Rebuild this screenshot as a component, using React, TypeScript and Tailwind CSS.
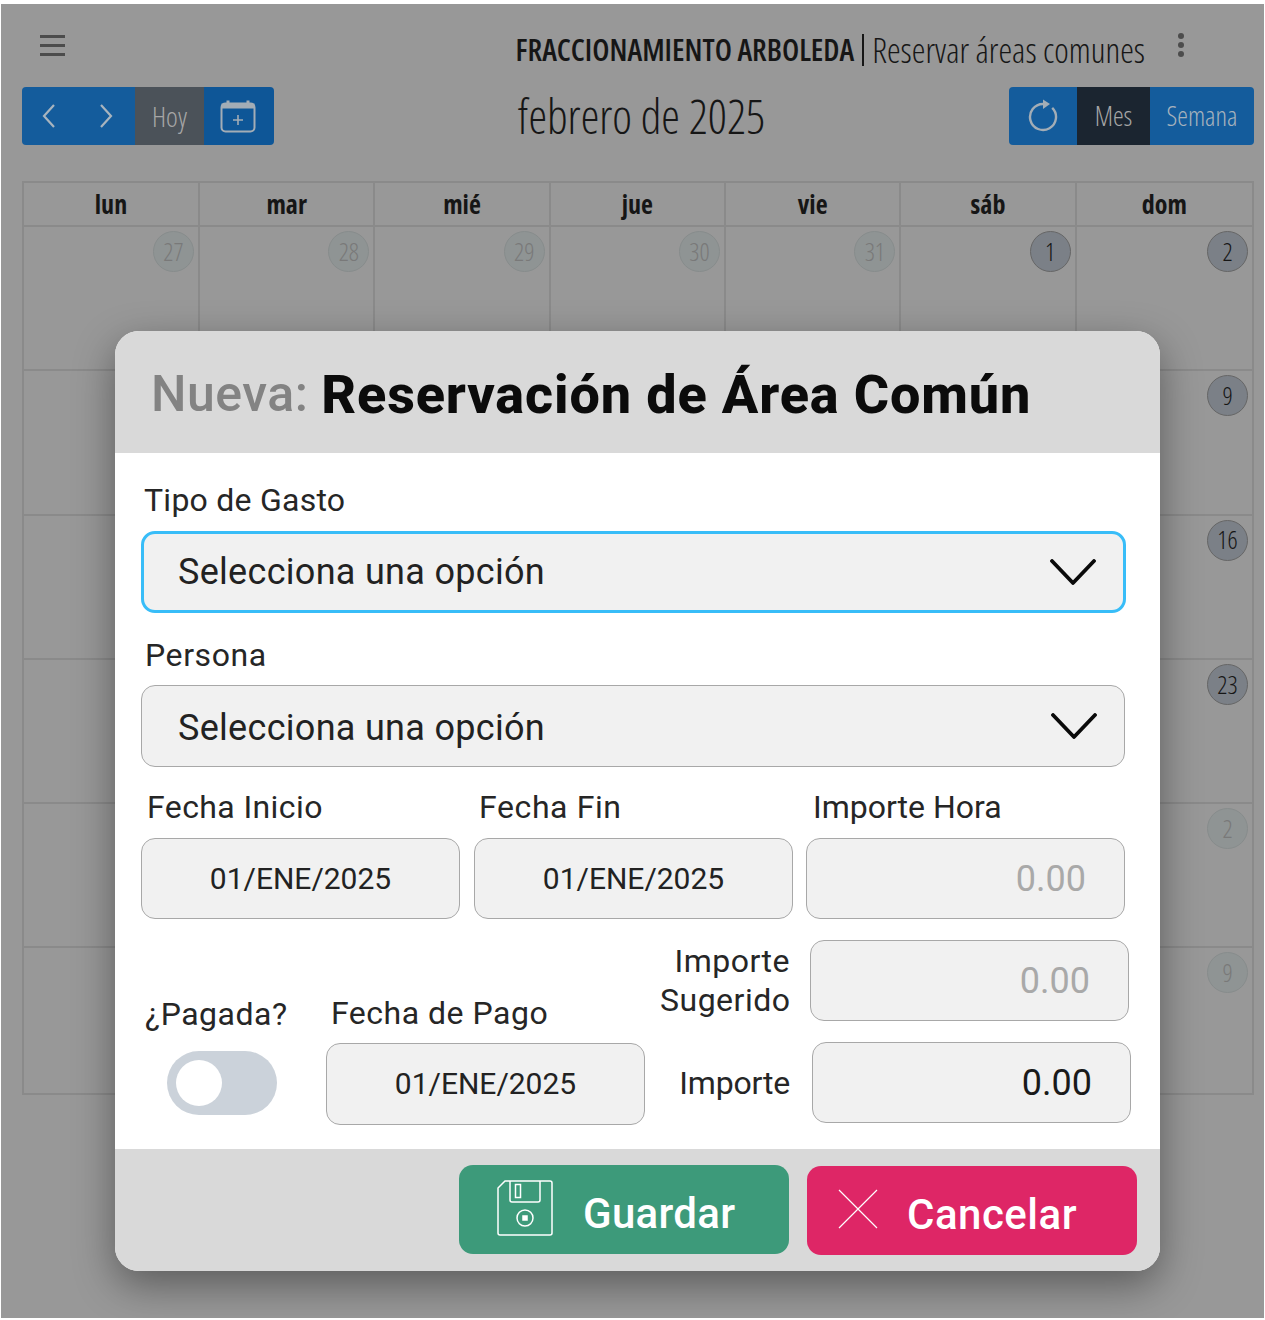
import React from "react";

const weekDays = ["lun", "mar", "mié", "jue", "vie", "sáb", "dom"];

const weeks = [
  [27, 28, 29, 30, 31, 1, 2],
  [3, 4, 5, 6, 7, 8, 9],
  [10, 11, 12, 13, 14, 15, 16],
  [17, 18, 19, 20, 21, 22, 23],
  [24, 25, 26, 27, 28, 1, 2],
  [3, 4, 5, 6, 7, 8, 9],
];

const isFaded = (w: number, d: number) => (w === 0 && d < 5) || (w === 4 && d > 4) || w === 5;

const Chevron = () => (
  <svg width="46" height="26" viewBox="0 0 46 26" fill="none" stroke="#0a0a0a" strokeWidth="3.8" strokeLinecap="round" strokeLinejoin="round">
    <path d="M2 2 L23 24 L44 2" />
  </svg>
);

const Select = ({ focused }: { focused?: boolean }) => (
  <div
    className={
      focused
        ? "flex h-[82px] items-center justify-between rounded-[14px] border-[3px] border-[#38bdf8] bg-[#f1f1f1] pl-[34px] pr-[27px] text-[36px] text-[#222]"
        : "mr-px flex h-[82px] items-center justify-between rounded-[14px] border border-[#a8a8a8] bg-[#f1f1f1] pl-[36px] pr-[27px] text-[36px] text-[#222]"
    }
  >
    <span className={focused ? "tracking-[0.3px]" : "pt-[3px] tracking-[0.3px]"}>Selecciona una opción</span>
    <Chevron />
  </div>
);

const DateBox = ({ tall }: { tall?: boolean }) => (
  <div
    className={
      tall
        ? "flex h-[82px] w-[319px] shrink-0 items-center justify-center rounded-[14px] border border-[#a8a8a8] bg-[#f1f1f1] text-[30px] text-[#222]"
        : "flex h-[81px] w-[319px] shrink-0 items-center justify-center rounded-[14px] border border-[#a8a8a8] bg-[#f1f1f1] text-[30px] text-[#222]"
    }
  >
    01/ENE/2025
  </div>
);

const AmountBox = ({ muted, className }: { muted?: boolean; className?: string }) => (
  <div
    className={`flex h-[81px] w-[319px] shrink-0 items-center justify-end rounded-[14px] border border-[#a8a8a8] bg-[#f1f1f1] pr-[38px] text-[36px] ${
      muted ? "text-[#a9a9a9]" : "text-[#1a1a1a]"
    } ${className ?? ""}`}
  >
    0.00
  </div>
);

export default function App() {
  return (
    <div className="h-[1320px] w-[1265px] bg-white pb-[2px] pl-px pr-px pt-[4px]">
      <div className="relative h-full overflow-hidden bg-[#989898] font-['Open_Sans',sans-serif] [font-stretch:75%]">
        {/* title bar */}
        <div className="flex h-[83px] items-start justify-between pl-[39px] pr-[119px]">
          <svg className="mt-[30px]" width="25" height="22" viewBox="0 0 25 22" fill="#4c4c4c">
            <rect y="1" width="25" height="3" />
            <rect y="10" width="25" height="3" />
            <rect y="19" width="25" height="3" />
          </svg>
          <div className="ml-auto mt-[27px] flex items-center leading-[38px] text-[#161616]">
            <span className="text-[30.3px] font-semibold">FRACCIONAMIENTO ARBOLEDA</span>
            <span className="mx-[8px] h-[32px] w-[2px] bg-[#161616]" />
            <span className="text-[34.6px] font-light">Reservar áreas comunes</span>
          </div>
          <div className="absolute right-[80px] top-[29px] flex flex-col gap-[3px]">
            <span className="h-[6px] w-[6px] rounded-full bg-[#4c4c4c]" />
            <span className="h-[6px] w-[6px] rounded-full bg-[#4c4c4c]" />
            <span className="h-[6px] w-[6px] rounded-full bg-[#4c4c4c]" />
          </div>
        </div>

        {/* toolbar */}
        <div className="flex h-[58px] items-center justify-between pl-[21px] pr-[10px]">
          <div className="flex h-[58px] w-[252px] overflow-hidden rounded-[4px]">
            <div className="flex w-[113px] items-center justify-between bg-[#145c9c] pl-[20px] pr-[22px]">
              <svg width="14" height="26" viewBox="0 0 14 26" fill="none" stroke="#a8b4be" strokeWidth="2.2"><path d="M12 2 L2 13 L12 24" /></svg>
              <svg width="14" height="26" viewBox="0 0 14 26" fill="none" stroke="#a8b4be" strokeWidth="2.2"><path d="M2 2 L12 13 L2 24" /></svg>
            </div>
            <div className="flex w-[69px] items-center justify-center bg-[#4b5259] text-[28px] font-light text-[#a6a6a6]">Hoy</div>
            <div className="flex flex-1 items-center justify-center bg-[#0e5697] pr-[2px]">
              <svg width="36" height="33" viewBox="0 0 36 33" fill="none" stroke="#a3adb6" strokeWidth="2">
                <rect x="1.5" y="3.5" width="33" height="28" rx="4" />
                <path d="M1.5 6 H34.5" strokeWidth="5" />
                <path d="M8 0.5 V4 M28 0.5 V4" strokeWidth="3" />
                <path d="M18 15 V25 M13 20 H23" strokeWidth="1.6" />
              </svg>
            </div>
          </div>
          <div className="text-[47px] font-light text-[#161616]">febrero de 2025</div>
          <div className="flex h-[58px] w-[245px] overflow-hidden rounded-[4px]">
            <div className="flex w-[68px] items-center justify-center bg-[#145c9c]">
              <svg width="30" height="34" viewBox="0 0 30 34" fill="none" stroke="#a3adb6" strokeWidth="2.4">
                <path d="M15 5 A13 13 0 1 0 24.2 8.8" />
                <path d="M15 0.5 L22 5 L15 10 Z" fill="#a3adb6" stroke="none" />
              </svg>
            </div>
            <div className="flex w-[73px] items-center justify-center bg-[#1b2530] text-[27px] font-light text-[#a6a6a6]">Mes</div>
            <div className="flex flex-1 items-center justify-center bg-[#145c9c] text-[27px] font-light text-[#a6b2bd]">Semana</div>
          </div>
        </div>

        {/* calendar */}
        <div className="ml-[21px] mt-[36px] w-[1232px] border-2 border-[#8a8a8a]">
          <div className="grid h-[44px] grid-cols-[176px_repeat(6,1fr)] border-b-2 border-[#8a8a8a]">
            {weekDays.map((day, i) => (
              <div key={day} className={`flex items-center justify-center text-[26px] font-bold text-[#161616] ${i < 6 ? "border-r-2 border-[#8a8a8a]" : ""}`}>
                {day}
              </div>
            ))}
          </div>
          {weeks.map((week, w) => (
            <div key={w} className={`grid h-[144.3px] grid-cols-[176px_repeat(6,1fr)] ${w < 5 ? "border-b-2 border-[#8a8a8a]" : ""}`}>
              {week.map((n, d) => (
                <div key={d} className={`flex justify-end pr-[4px] pt-[4px] ${d < 6 ? "border-r-2 border-[#8a8a8a]" : ""}`}>
                  {(w === 0 || d === 6) && (
                    <span
                      className={
                        isFaded(w, d)
                          ? "flex h-[41px] w-[41px] items-center justify-center rounded-full border border-[#878c8c] bg-[#8f9494] text-[25px] font-light text-[#797979]"
                          : "flex h-[41px] w-[41px] items-center justify-center rounded-full border border-[#666] bg-[#7b8087] text-[25px] font-light text-[#161616]"
                      }
                    >
                      {n}
                    </span>
                  )}
                </div>
              ))}
            </div>
          ))}
        </div>

        {/* modal */}
        <div className="absolute left-[114px] top-[327px] flex h-[940px] w-[1045px] flex-col overflow-hidden rounded-[24px] bg-white font-['Roboto',sans-serif] [font-stretch:100%] shadow-[0_14px_40px_rgba(0,0,0,0.4)]">
          <div className="flex h-[122px] items-center bg-[#d9d9d9] pl-[36px] pt-[4px]">
            <span className="text-[50px] font-medium tracking-[0.5px] text-[#838383]">Nueva:&nbsp;</span>
            <span className="text-[54px] font-extrabold tracking-[0.85px] text-[#0b0b0b]">Reservación de Área Común</span>
          </div>

          <div className="flex-1 pl-[26px] pr-[34px] text-[32px] leading-[40px] text-[#262626]">
            <div className="ml-[3px] mt-[27px] mb-[11px] tracking-[0.25px]">Tipo de Gasto</div>
            <Select focused />
            <div className="ml-[4px] mb-[10px] mt-[22px] tracking-[0.6px]">Persona</div>
            <Select />

            <div className="mt-[20px] flex">
              <div className="ml-[6px] w-[332px] tracking-[0.4px]">Fecha Inicio</div>
              <div className="w-[334px] tracking-[0.6px]">Fecha Fin</div>
              <div>Importe Hora</div>
            </div>
            <div className="mt-[11px] flex gap-[14px]">
              <DateBox />
              <DateBox />
              <AmountBox muted className="ml-[-1px]" />
            </div>

            <div className="mt-[21px] flex">
              <div className="mt-[54px] w-[185px] shrink-0">
                <div className="ml-[4px] tracking-[0.5px]">¿Pagada?</div>
                <div className="ml-[26px] mt-[17px] flex h-[64px] w-[110px] items-center rounded-full bg-[#cbd2da] pl-[9px]">
                  <span className="h-[46px] w-[46px] rounded-full bg-white" />
                </div>
              </div>
              <div className="mt-[53px] w-[318px] shrink-0">
                <div className="ml-[5px] mb-[10px] tracking-[0.5px]">Fecha de Pago</div>
                <DateBox tall />
              </div>
              <div className="ml-[16px] w-[130px] shrink-0 text-right leading-[39px]">
                <div className="mt-[2px] tracking-[0.5px]">Importe Sugerido</div>
                <div className="mt-[44px] tracking-[-0.2px]">Importe</div>
              </div>
              <div className="ml-[20px] shrink-0">
                <AmountBox muted />
                <AmountBox className="ml-[2px] mt-[21px]" />
              </div>
            </div>
          </div>

          <div className="flex h-[122px] items-start justify-end gap-[18px] bg-[#d9d9d9] pr-[23px] pt-[16px] text-[42px] font-medium text-white">
            <div className="flex h-[89px] w-[330px] items-center rounded-[14px] bg-[#3d9a7a] pl-[38px]">
              <svg className="mb-[3px]" width="56" height="56" viewBox="0 0 56 56" fill="none" stroke="#fff" strokeWidth="1.5">
                <path d="M8 1 H53 A2 2 0 0 1 55 3 V53 A2 2 0 0 1 53 55 H3 A2 2 0 0 1 1 53 V8 Z" />
                <path d="M13 1 V20 A2 2 0 0 0 15 22 H41 A2 2 0 0 0 43 20 V1" />
                <rect x="18.5" y="4.5" width="5" height="13" />
                <circle cx="28" cy="38" r="8" />
                <rect x="26" y="36" width="4" height="4" fill="#fff" />
              </svg>
              <span className="ml-[30px] pt-[7px] tracking-[0.3px]">Guardar</span>
            </div>
            <div className="mt-px flex h-[89px] w-[330px] items-center rounded-[14px] bg-[#de2666] pl-[31px]">
              <svg className="mb-[3px]" width="40" height="40" viewBox="0 0 40 40" fill="none" stroke="#fff" strokeWidth="1.2">
                <path d="M1 1 L39 39 M39 1 L1 39" />
              </svg>
              <span className="ml-[29px] pt-[7px] tracking-[0.5px]">Cancelar</span>
            </div>
          </div>
        </div>
      </div>
    </div>
  );
}
